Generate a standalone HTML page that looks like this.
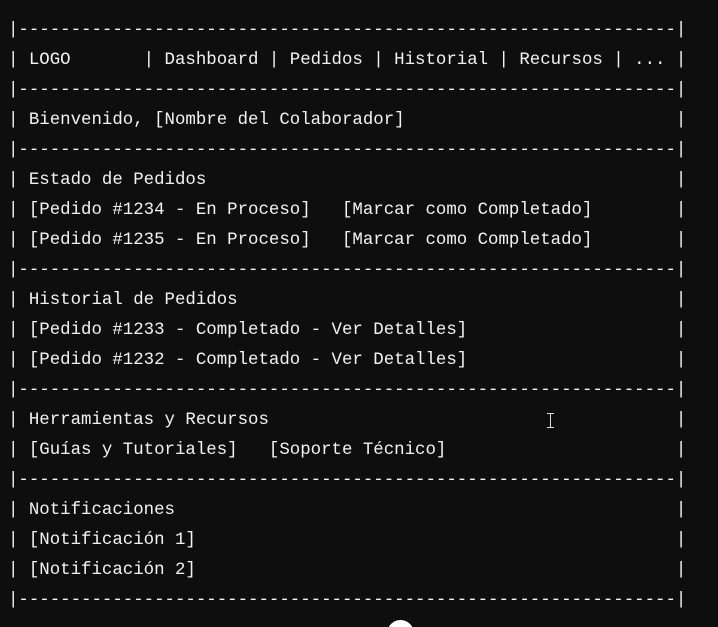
<!DOCTYPE html>
<html><head><meta charset="utf-8"><style>
html,body{margin:0;padding:0;background:#0e0e0e;width:718px;height:627px;overflow:hidden;position:relative}
pre{position:absolute;left:8px;top:16px;margin:0;font-family:"Liberation Mono",monospace;font-size:17.4px;line-height:30px;color:#f2f2f2;letter-spacing:0}
.c{position:absolute;left:387px;top:620px;width:27px;height:27px;border-radius:50%;background:#fff}
.ib{position:absolute;left:550px;top:413px;width:1px;height:15px;background:#ddd}
.ib:before{content:"";position:absolute;left:-3px;top:0;width:7px;height:15px;border-top:1px solid #ddd;border-bottom:1px solid #ddd;box-sizing:border-box}
</style></head><body>
<pre>|---------------------------------------------------------------|
| LOGO       | Dashboard | Pedidos | Historial | Recursos | ... |
|---------------------------------------------------------------|
| Bienvenido, [Nombre del Colaborador]                          |
|---------------------------------------------------------------|
| Estado de Pedidos                                             |
| [Pedido #1234 - En Proceso]   [Marcar como Completado]        |
| [Pedido #1235 - En Proceso]   [Marcar como Completado]        |
|---------------------------------------------------------------|
| Historial de Pedidos                                          |
| [Pedido #1233 - Completado - Ver Detalles]                    |
| [Pedido #1232 - Completado - Ver Detalles]                    |
|---------------------------------------------------------------|
| Herramientas y Recursos                                       |
| [Guías y Tutoriales]   [Soporte Técnico]                      |
|---------------------------------------------------------------|
| Notificaciones                                                |
| [Notificación 1]                                              |
| [Notificación 2]                                              |
|---------------------------------------------------------------|</pre>
<div class="ib"></div>
<div class="c"></div>
</body></html>
